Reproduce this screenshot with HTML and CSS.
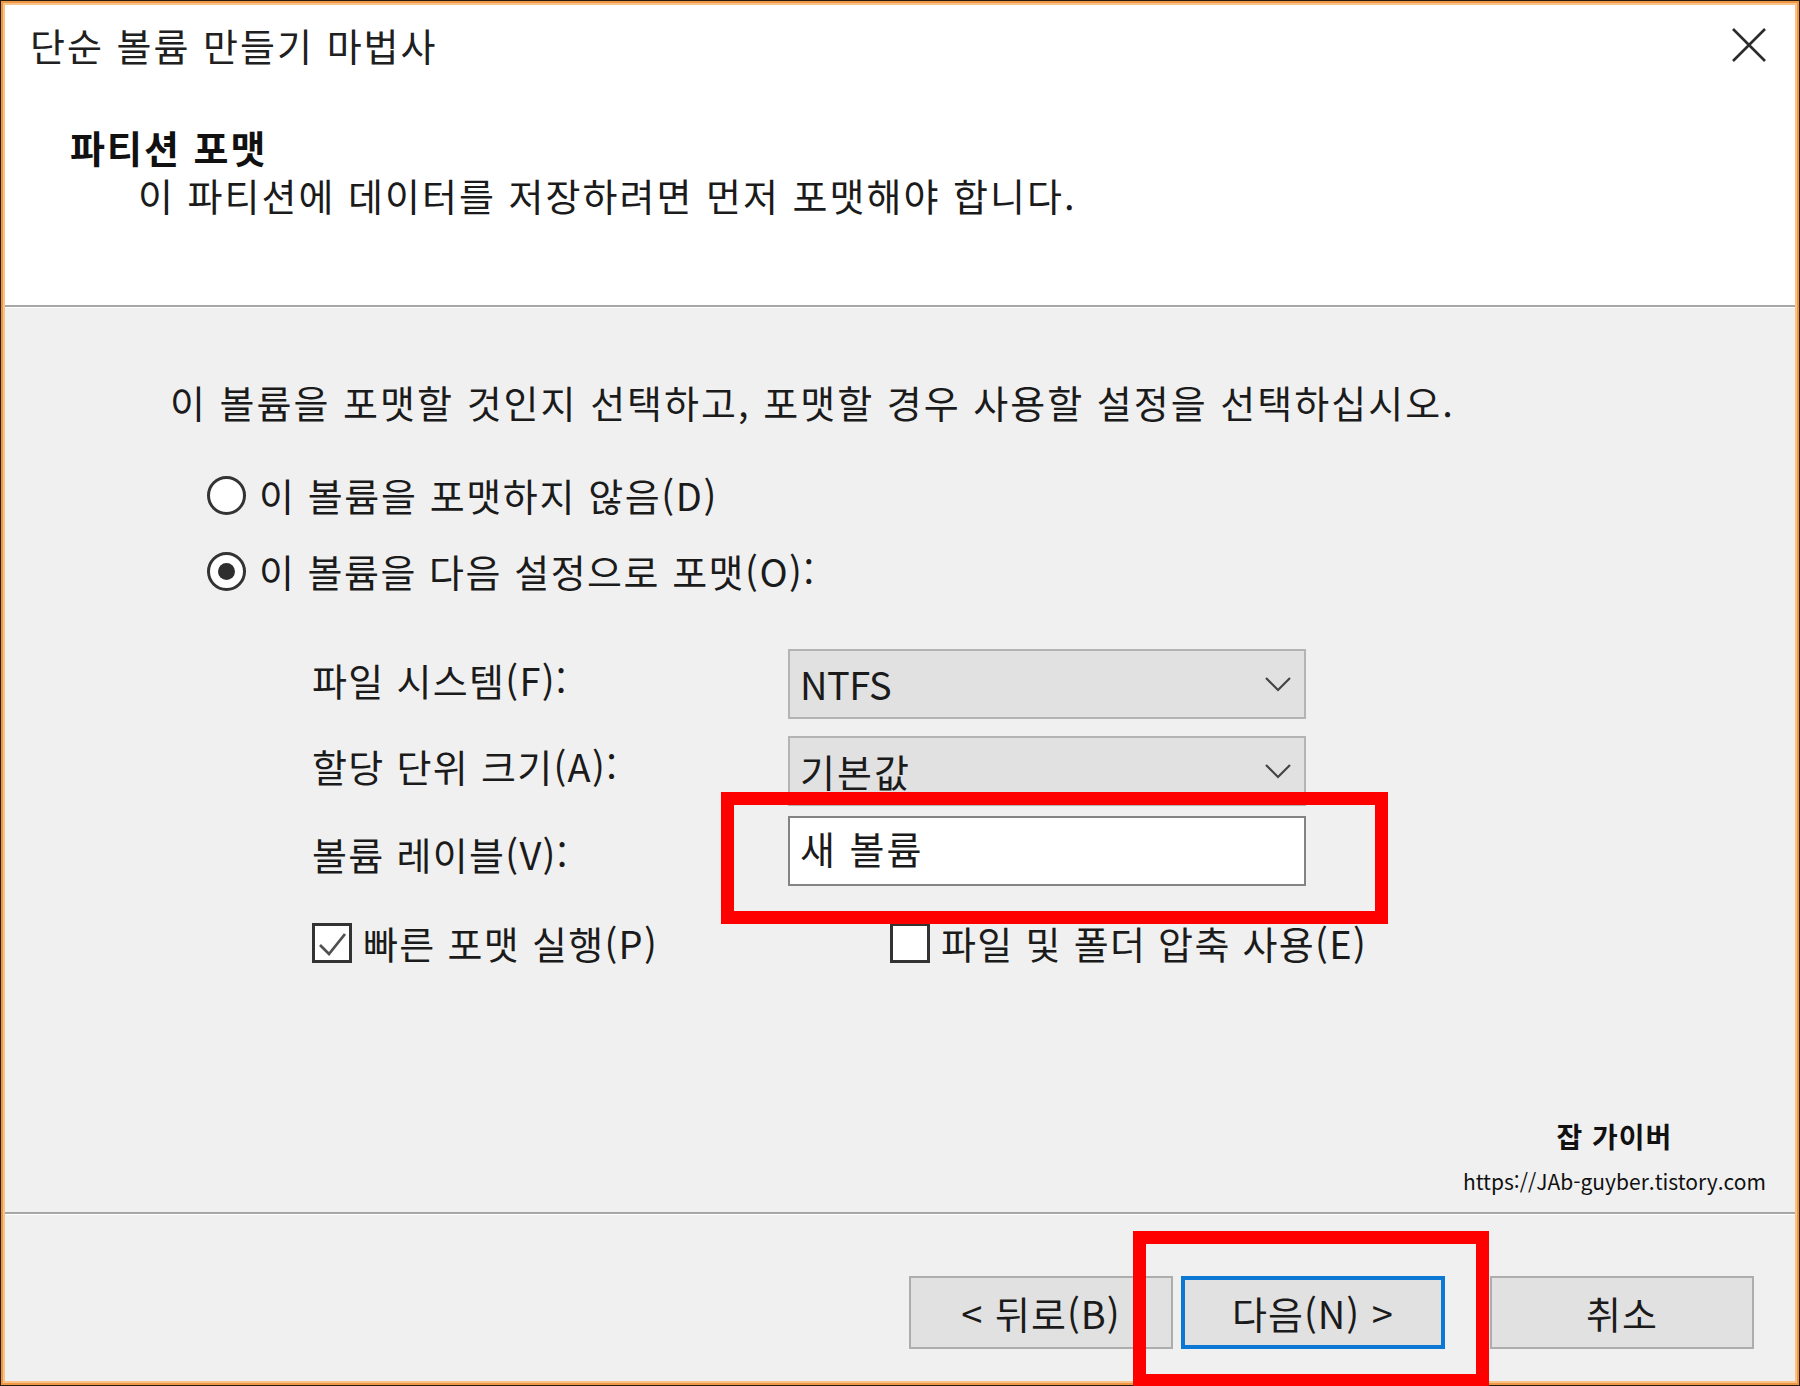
FILE: index.html
```html
<!DOCTYPE html>
<html lang="ko">
<head>
<meta charset="utf-8">
<title>단순 볼륨 만들기 마법사</title>
<link rel="stylesheet" href="styles.css">
</head>
<body>
<div class="window">
  <div class="frame">
    <div class="inner">
      <header class="header">
        <div class="titlebar">
          <span class="title">단순 볼륨 만들기 마법사</span>
          <svg class="close" width="34" height="34" viewBox="0 0 34 34" aria-hidden="true">
            <path d="M1 1 L33 33 M33 1 L1 33" stroke="#2b2b2b" stroke-width="2.6" fill="none"/>
          </svg>
        </div>
        <div class="heading">파티션 포맷</div>
        <div class="subheading">이 파티션에 데이터를 저장하려면 먼저 포맷해야 합니다.</div>
      </header>

      <main class="body">
        <p class="intro">이 볼륨을 포맷할 것인지 선택하고, 포맷할 경우 사용할 설정을 선택하십시오.</p>

        <div class="radio-row">
          <span class="radio"></span>
          <span class="radio-text">이 볼륨을 포맷하지 않음(D)</span>
        </div>
        <div class="radio-row radio-row--second">
          <span class="radio radio--on"></span>
          <span class="radio-text radio-text--long">이 볼륨을 다음 설정으로 포맷(O):</span>
        </div>

        <div class="form">
          <div class="field field--first">
            <span class="label">파일 시스템(F):</span>
            <div class="combo">
              <span class="value value--latin">NTFS</span>
              <svg class="chev" width="26" height="15" viewBox="0 0 26 15" aria-hidden="true"><path d="M1 1 L13 13 L25 1" stroke="#444" stroke-width="2.2" fill="none"/></svg>
            </div>
          </div>
          <div class="field field--second">
            <span class="label">할당 단위 크기(A):</span>
            <div class="combo">
              <span class="value">기본값</span>
              <svg class="chev" width="26" height="15" viewBox="0 0 26 15" aria-hidden="true"><path d="M1 1 L13 13 L25 1" stroke="#444" stroke-width="2.2" fill="none"/></svg>
            </div>
          </div>
          <div class="field field--third">
            <span class="label label--low">볼륨 레이블(V):</span>
            <div class="textbox"><span class="value">새 볼륨</span></div>
          </div>

          <div class="checks">
            <div class="check check--first">
              <span class="box">
                <svg width="34" height="34" viewBox="0 0 34 34" aria-hidden="true"><path d="M5 19 L14 28 L30 8" stroke="#505050" stroke-width="2.8" fill="none"/></svg>
              </span>
              <span class="check-text">빠른 포맷 실행(P)</span>
            </div>
            <div class="check">
              <span class="box"></span>
              <span class="check-text">파일 및 폴더 압축 사용(E)</span>
            </div>
          </div>
        </div>

        <div class="watermark">
          <div class="wm-name">잡 가이버</div>
          <div class="wm-url">https://JAb-guyber.tistory.com</div>
        </div>
      </main>

      <footer class="footer">
        <button class="btn">&lt; 뒤로(B)</button>
        <button class="btn btn--default">다음(N) &gt;</button>
        <button class="btn btn--cancel">취소</button>
      </footer>
    </div>
  </div>

  <div class="mark mark--label"></div>
  <div class="mark mark--next"></div>
</div>
</body>
</html>
```

FILE: styles.css
```css
* {
  box-sizing: border-box;
  margin: 0;
  padding: 0;
}

html,
body {
  width: 1800px;
  height: 1386px;
  overflow: hidden;
}

body {
  font-family: "Noto Sans CJK KR", "Noto Sans", sans-serif;
  font-size: 38px;
  letter-spacing: 2px;
  color: #1b1b1b;
  background: #ffffff;
}

.window {
  position: relative;
  width: 1800px;
  height: 1386px;
  border: 1px solid #2a1d10;
}

.frame {
  height: 100%;
  border: 2px solid #ee9845;
}

.inner {
  height: 100%;
  border: 2px solid #f8c288;
  display: flex;
  flex-direction: column;
}

/* ---------- header ---------- */
.header {
  height: 302px;
  flex: 0 0 302px;
  background: #ffffff;
  border-bottom: 2px solid #a7a7a7;
  padding: 18px 29px 0 25px;
}

.titlebar {
  display: flex;
  justify-content: space-between;
  align-items: center;
  height: 44px;
  line-height: 44px;
}

.title {
  color: #202020;
}

.close {
  display: block;
}

.heading {
  margin-top: 56px;
  margin-left: 40px;
  line-height: 48px;
  font-weight: 700;
  color: #111;
}

.subheading {
  margin-left: 108px;
  line-height: 48px;
}

/* ---------- body ---------- */
.body {
  flex: 0 0 907px;
  height: 907px;
  background: #f0f0f0;
  border-top: 1px solid #ffffff;
  border-bottom: 2px solid #a7a7a7;
  padding: 70px 0 16px 0;
  display: flex;
  flex-direction: column;
}

.intro {
  margin-left: 165px;
  line-height: 48px;
}

.radio-row {
  display: flex;
  align-items: center;
  height: 48px;
  margin-top: 45px;
  margin-left: 202px;
}

.radio-row--second {
  margin-top: 28px;
}

.radio {
  width: 39px;
  height: 39px;
  flex: 0 0 39px;
  border-radius: 50%;
  border: 3px solid #333333;
  background: #ffffff;
  display: flex;
  align-items: center;
  justify-content: center;
}

.radio--on::after {
  content: "";
  width: 17px;
  height: 17px;
  border-radius: 50%;
  background: #2e2e2e;
}

.radio-text {
  margin-left: 13px;
  line-height: 48px;
  letter-spacing: 1.6px;
}

.radio-text--long {
  letter-spacing: 1.5px;
}

/* ---------- form ---------- */
.form {
  padding-left: 307px;
}

.field {
  display: flex;
  align-items: flex-start;
}

.field--first {
  margin-top: 54px;
}

.field--second {
  margin-top: 17px;
}

.field--third {
  margin-top: 10px;
}

.label {
  flex: 0 0 476px;
  width: 476px;
  line-height: 48px;
  padding-top: 7px;
  letter-spacing: 1.3px;
}

.field--second .label {
  padding-top: 6px;
}

.label--low {
  padding-top: 14px;
}

.combo {
  width: 518px;
  height: 70px;
  background: #e1e1e1;
  border: 2px solid #b4b4b4;
  display: flex;
  align-items: center;
  justify-content: space-between;
  padding: 0 13px 0 10px;
  line-height: 48px;
}

.value {
  letter-spacing: 2px;
}

.value--latin {
  letter-spacing: -0.5px;
}

.chev {
  display: block;
}

.textbox {
  width: 518px;
  height: 70px;
  background: #ffffff;
  border: 2px solid #838383;
  display: flex;
  align-items: center;
  padding: 0 10px 6px 10px;
  line-height: 48px;
}

.checks {
  display: flex;
  margin-top: 33px;
  height: 48px;
}

.check {
  display: flex;
  align-items: center;
}

.check--first {
  flex: 0 0 578px;
}

.box {
  width: 40px;
  height: 40px;
  flex: 0 0 40px;
  border: 3px solid #333333;
  background: #ffffff;
  display: flex;
  align-items: center;
  justify-content: center;
}

.box svg {
  display: block;
}

.check-text {
  margin-left: 11px;
  line-height: 48px;
  letter-spacing: 1.3px;
}

/* ---------- watermark ---------- */
.watermark {
  margin-top: auto;
  align-self: flex-end;
  margin-right: 29px;
  text-align: center;
  color: #111;
}

.wm-name {
  font-size: 28px;
  font-weight: 700;
  line-height: 36px;
  letter-spacing: 1px;
}

.wm-url {
  margin-top: 12px;
  font-size: 21px;
  line-height: 30px;
  letter-spacing: 0;
}

/* ---------- footer ---------- */
.footer {
  flex: 1 1 auto;
  background: #f0f0f0;
  border-top: 1px solid #ffffff;
  display: flex;
  justify-content: flex-end;
  align-items: flex-start;
  padding: 61px 41px 0 0;
}

.btn {
  font-family: "Noto Sans CJK KR", "Noto Sans", sans-serif;
  font-size: 38px;
  letter-spacing: 1px;
  color: #1b1b1b;
  width: 264px;
  height: 73px;
  background: #e1e1e1;
  border: 2px solid #adadad;
  line-height: 48px;
  display: flex;
  align-items: center;
  justify-content: center;
}

.btn--default {
  margin-left: 8px;
  border: 4px solid #0a78d4;
}

.btn--cancel {
  margin-left: 45px;
}

/* ---------- annotation overlays ---------- */
.mark {
  position: absolute;
  border: 13px solid #ff0000;
}

.mark--label {
  left: 720px;
  top: 791px;
  width: 667px;
  height: 132px;
}

.mark--next {
  left: 1132px;
  top: 1230px;
  width: 356px;
  height: 156px;
}
```
